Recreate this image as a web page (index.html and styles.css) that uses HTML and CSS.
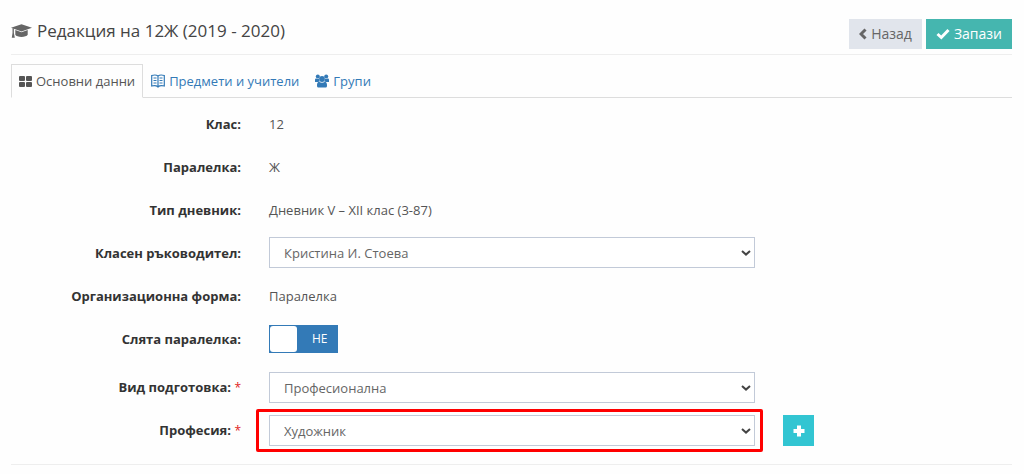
FILE: index.html
```
<!DOCTYPE html>
<html lang="bg">
<head>
    <meta charset="UTF-8">
    <meta name="viewport" content="width=device-width, initial-scale=1.0">
    <title>Редакция на 12Ж (2019 - 2020)</title>
    <link rel="stylesheet" href="styles.css">
</head>
<body>
    <header class="page-header">
        <h1>
            <svg class="icon-cap" viewBox="0 0 22 16" aria-hidden="true">
                <path d="M11 .8 L22 4.500 L11 8.400 L0 4.500 Z"/>
                <path d="M4.500 7 L11 9.300 L17.500 7 V12 C16 15 6 15 4.500 12 Z"/>
                <path d="M1.600 5 H3 V10 L4 15 H.8 L1.600 10 Z"/>
            </svg>
            Редакция на 12Ж (2019 - 2020)
        </h1>
        <div class="actions">
            <button type="button" class="btn btn-back">
                <svg class="icon-back" viewBox="0 0 8 12" aria-hidden="true"><path d="M6.500 1.500 L2 6 L6.500 10.500"/></svg>
                Назад
            </button>
            <button type="submit" form="form-class" class="btn btn-save">
                <svg class="icon-check" viewBox="0 0 14 12" aria-hidden="true"><path d="M1.500 6 L5.300 9.500 L12.500 2"/></svg>
                Запази
            </button>
        </div>
    </header>

    <nav class="tabs">
        <a href="#main" class="tab active">
            <svg class="icon-grid" viewBox="0 0 13 11" aria-hidden="true">
                <rect x="0" y="0" width="6" height="5" rx="1"/>
                <rect x="7" y="0" width="6" height="5" rx="1"/>
                <rect x="0" y="6" width="6" height="5" rx="1"/>
                <rect x="7" y="6" width="6" height="5" rx="1"/>
            </svg>
            Основни данни
        </a>
        <a href="#subjects" class="tab">
            <svg class="icon-book" viewBox="0 0 14 14" aria-hidden="true">
                <path d="M7 2 C5.500 .8 3 .8 .7 1.500 V12 C3 11.500 5.500 11.500 7 13 C8.500 11.500 11 11.500 13.300 12 V1.500 C11 .8 8.500 .8 7 2 V13"/>
                <path d="M2.500 4 H5.500 M2.500 6.500 H5.500 M2.500 9 H5.500 M8.500 4 H11.500 M8.500 6.500 H11.500 M8.500 9 H11.500"/>
            </svg>
            Предмети и учители
        </a>
        <a href="#groups" class="tab">
            <svg class="icon-users" viewBox="0 0 14 14" aria-hidden="true">
                <circle cx="2.800" cy="2.500" r="2"/>
                <circle cx="11.200" cy="2.500" r="2"/>
                <path d="M0 8 V6 C0 4.500 1 4.300 1.500 4.500 C2.500 5 3.300 5 4 4.600 C4 6 4.300 7 4.800 7.400 C4 7.400 3.300 7.700 3 8 Z"/>
                <path d="M14 8 V6 C14 4.500 13 4.300 12.500 4.500 C11.500 5 10.700 5 10 4.600 C10 6 9.700 7 9.200 7.400 C10 7.400 10.700 7.700 11 8 Z"/>
                <circle cx="7" cy="5" r="2.900"/>
                <path d="M4 7.700 C6 9 8 9 10 7.700 C11.800 8 12 10 12 11.500 C12 13 11.500 13.500 10.500 13.500 H3.500 C2.500 13.500 2 13 2 11.500 C2 10 2.200 8 4 7.700 Z"/>
            </svg>
            Групи
        </a>
    </nav>

    <form id="form-class">
        <div class="row">
            <span class="label">Клас:</span>
            <span>12</span>
        </div>
        <div class="row">
            <span class="label">Паралелка:</span>
            <span>Ж</span>
        </div>
        <div class="row">
            <span class="label">Тип дневник:</span>
            <span>Дневник V – XII клас (3-87)</span>
        </div>
        <div class="row">
            <label class="label" for="teacher">Класен ръководител:</label>
            <div class="select">
                <select id="teacher"><option>Кристина И. Стоева</option></select>
                <svg class="arrow" viewBox="0 0 10 6" aria-hidden="true"><path d="M1 1 L5 4.600 L9 1"/></svg>
            </div>
        </div>
        <div class="row">
            <span class="label">Организационна форма:</span>
            <span>Паралелка</span>
        </div>
        <div class="row row-switch">
            <label class="label" for="merged">Слята паралелка:</label>
            <div class="switch">
                <input type="checkbox" id="merged">
                <span class="switch-text">НЕ</span>
            </div>
        </div>
        <div class="row">
            <label class="label" for="training">Вид подготовка: <span class="required">*</span></label>
            <div class="select">
                <select id="training" required><option>Професионална</option></select>
                <svg class="arrow" viewBox="0 0 10 6" aria-hidden="true"><path d="M1 1 L5 4.600 L9 1"/></svg>
            </div>
        </div>
        <div class="row">
            <label class="label" for="profession">Професия: <span class="required">*</span></label>
            <div class="select highlight">
                <select id="profession" required><option>Художник</option></select>
                <svg class="arrow" viewBox="0 0 10 6" aria-hidden="true"><path d="M1 1 L5 4.600 L9 1"/></svg>
            </div>
            <button type="button" class="btn-add" aria-label="Добави">
                <svg viewBox="0 0 12 12" aria-hidden="true"><path d="M6 .5 V11.500 M.5 6 H11.500"/></svg>
            </button>
        </div>
    </form>
</body>
</html>
```
FILE: styles.css
```
* {
    box-sizing: border-box;
}
body {
    margin: 0;
    padding: 14px 12px 0 11px;
    background: #fefefe;
    color: #555;
    font-family: "Open Sans", sans-serif;
    font-size: 13px;
    line-height: 20px;
}
svg {
    flex: none;
    fill: currentColor;
}

/* Header */
.page-header {
    display: flex;
    justify-content: space-between;
    align-items: flex-end;
    padding-bottom: 5px;
    border-bottom: 1px solid #eee;
}
h1 {
    display: flex;
    align-items: center;
    gap: 5px;
    margin: 0;
    padding-bottom: 6px;
    color: #444;
    font-size: 17px;
    font-weight: 400;
    line-height: 24px;
}
.icon-cap {
    width: 21px;
    height: 16px;
    color: #666;
}
.actions {
    display: flex;
    gap: 4px;
    padding-top: 5px;
}
.btn {
    display: flex;
    align-items: center;
    gap: 4px;
    padding: 5px 10px;
    border: none;
    font-family: inherit;
    font-size: 14px;
    line-height: 20px;
    cursor: pointer;
}
.btn svg {
    fill: none;
    stroke: currentColor;
    stroke-width: 3;
}
.btn-back {
    background: #e1e5ec;
    color: #666;
}
.btn-save {
    background: #45b6af;
    color: #fff;
}
.icon-back {
    width: 8px;
    height: 12px;
}
.icon-check {
    width: 14px;
    height: 12px;
}

/* Tabs */
.tabs {
    display: flex;
    margin-top: 9px;
    border-bottom: 1px solid #ddd;
}
.tab {
    display: flex;
    align-items: center;
    gap: 4px;
    margin-bottom: -1px;
    padding: 6px 7px;
    border: 1px solid transparent;
    color: #337ab7;
    text-decoration: none;
}
.tab.active {
    background: #fefefe;
    border-color: #ddd;
    border-bottom-color: #fefefe;
    color: #555;
}
.icon-grid {
    width: 13px;
    height: 11px;
}
.icon-book {
    width: 14px;
    height: 14px;
    fill: none;
    stroke: currentColor;
    stroke-width: 1.200;
}
.icon-users {
    width: 14px;
    height: 14px;
}

/* Form */
form {
    padding: 10px 0 18px;
    border-bottom: 1px solid #eee;
}
.row {
    display: grid;
    grid-template-columns: 230fr 486fr 229fr;
    gap: 28px;
    align-items: center;
    min-height: 31px;
    margin-bottom: 12px;
}
.row:last-child {
    margin-bottom: 0;
}
.row-switch {
    min-height: 32px;
    margin-bottom: 17px;
}
.label {
    color: #333;
    font-weight: 700;
    text-align: right;
}
.required {
    color: #e02222;
    font-size: 12px;
    font-weight: 400;
}
.select {
    position: relative;
}
select {
    display: block;
    width: 100%;
    height: 31px;
    padding: 0 30px 0 14px;
    border: 1px solid #c2cad8;
    border-radius: 0;
    background: #fff;
    color: #666;
    font-family: inherit;
    font-size: 13px;
    appearance: none;
}
.arrow {
    position: absolute;
    top: 13px;
    right: 4px;
    width: 10px;
    height: 6px;
    fill: none;
    stroke: #444;
    stroke-width: 2;
    pointer-events: none;
}
.highlight::after {
    content: "";
    position: absolute;
    inset: -6px -8px -6px -13px;
    border: 3px solid #ff0000;
    border-radius: 2px;
    pointer-events: none;
}
.switch {
    display: grid;
    align-items: center;
    width: 69px;
    height: 28px;
    border: 1px solid #337ab7;
    background: #337ab7;
    color: #fff;
    font-size: 12px;
}
.switch input,
.switch-text {
    grid-area: 1 / 1;
}
.switch input {
    width: 100%;
    height: 26px;
    margin: 0;
    appearance: none;
    cursor: pointer;
}
.switch input::before {
    content: "";
    display: block;
    width: 27px;
    height: 26px;
    border-radius: 3px;
    background: #fff;
}
.switch input:checked::before {
    margin-left: auto;
}
.switch-text {
    padding-left: 42px;
    pointer-events: none;
}
.btn-add {
    display: flex;
    align-items: center;
    justify-content: center;
    width: 31px;
    height: 31px;
    padding: 0;
    border: none;
    background: #32c5d2;
    color: #fff;
    cursor: pointer;
}
.btn-add svg {
    width: 12px;
    height: 12px;
    stroke: currentColor;
    stroke-width: 4;
}
```
